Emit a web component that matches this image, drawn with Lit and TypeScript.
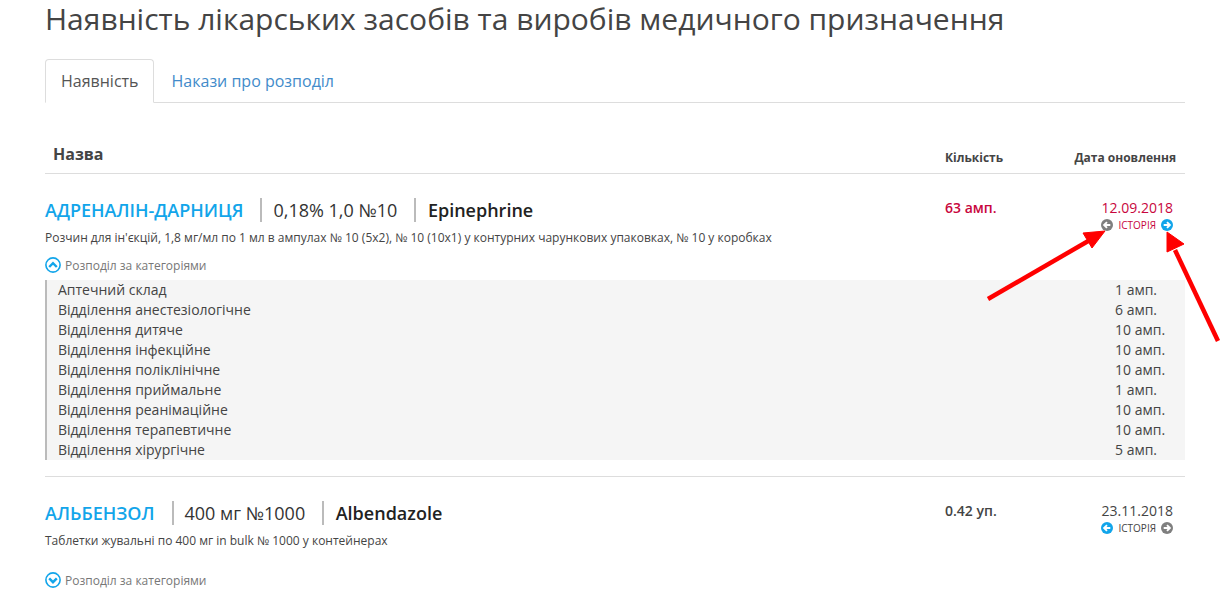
import { LitElement, html, css, svg } from "lit";
import { customElement } from "lit/decorators.js";

const cats: [string, string][] = [
  ["Аптечний склад", "1 амп."],
  ["Відділення анестезіологічне", "6 амп."],
  ["Відділення дитяче", "10 амп."],
  ["Відділення інфекційне", "10 амп."],
  ["Відділення поліклінічне", "10 амп."],
  ["Відділення приймальне", "1 амп."],
  ["Відділення реанімаційне", "10 амп."],
  ["Відділення терапевтичне", "10 амп."],
  ["Відділення хірургічне", "5 амп."],
];

const BLUE = "#12a5ea";

const arrowIcon = (dir: "left" | "right", color: string) => html`<svg class="ico" viewBox="0 0 12 12">
  <circle cx="6" cy="6" r="6" fill=${color}></circle>
  ${dir === "left"
    ? svg`<path d="M9.3 6H3.4M6 3.1 3.1 6 6 8.9" fill="none" stroke="#fff" stroke-width="1.9"></path>`
    : svg`<path d="M2.7 6h5.9M6 3.1 8.9 6 6 8.9" fill="none" stroke="#fff" stroke-width="1.9"></path>`}
</svg>`;

const chevron = (up: boolean) => html`<svg class="chev" viewBox="0 0 16 16">
  <circle cx="8" cy="8" r="7.1" fill="none" stroke=${BLUE} stroke-width="1.6"></circle>
  <path d=${up ? "M4.2 10 8 6.2 11.8 10" : "M4.2 6.4 8 10.2 11.8 6.4"} fill="none" stroke=${BLUE} stroke-width="2.4"></path>
</svg>`;

@customElement("app-root")
export class AppRoot extends LitElement {
  static styles = css`
    :host {
      display: block;
      position: relative;
      height: 603px;
      overflow: hidden;
      background: #fff;
      font-family: "Open Sans", sans-serif;
      color: #444;
    }
    .page { padding: 0 40px 0 45px; }
    h1 {
      margin: 0;
      height: 59px;
      box-sizing: border-box;
      font-size: 30px;
      line-height: 38px;
      font-weight: 400;
      color: #444;
      white-space: nowrap;
    }
    .tabs { display: flex; height: 43px; border-bottom: 1px solid #ddd; }
    .tab {
      box-sizing: border-box;
      height: 44px;
      padding: 0 15px;
      font-size: 16px;
      line-height: 44px;
      color: #428bca;
    }
    .tab.active {
      color: #555;
      background: #fff;
      border: 1px solid #ddd;
      border-bottom-color: #fff;
      border-radius: 4px 4px 0 0;
      line-height: 42px;
      padding-right: 14px;
      margin-right: 3px;
    }
    .head {
      display: grid;
      grid-template-columns: 1fr 120px 120px;
      height: 71px;
      box-sizing: border-box;
      padding-top: 41px;
      border-bottom: 1px solid #ddd;
      font-weight: 700;
      font-size: 12px;
      color: #444;
    }
    .head .name { font-size: 16px; font-weight: 700; padding-left: 8px; line-height: 20px; }
    .head .qty { line-height: 27px; }
    .head .date { line-height: 27px; text-align: right; padding-right: 9px; white-space: nowrap; }
    .item { display: grid; grid-template-columns: 1fr 120px 120px; }
    .item.first { padding-top: 23px; }
    .item.second { padding-top: 23px; border-top: 1px solid #ddd; margin-top: 16px; }
    .title { display: flex; align-items: center; height: 25px; font-size: 18px; color: #333; white-space: nowrap; }
    .drug { color: #12a5ea; font-weight: 600; }
    .sep { width: 2px; height: 24px; background: #bbb; margin: 0 12px 0 17px; }
    .inn { font-weight: 600; color: #222; margin-left: -0.5px; }
    .dose { margin-left: -1px; }
    .desc { font-size: 12px; line-height: 16px; margin-top: 8px; color: #444; white-space: nowrap; }
    .toggle {
      display: flex;
      align-items: center;
      gap: 4px;
      margin-top: 11px;
      height: 16px;
      font-size: 12px;
      color: #777;
    }
    .second .toggle { margin-top: 23px; }
    .chev { width: 16px; height: 16px; flex: none; }
    .qty-v { font-size: 14px; font-weight: 600; line-height: 18px; margin-top: 2px; color: #444; }
    .qty-v.red, .date-v.red { color: #c8063d; }
    .date-col { padding-right: 12px; display: flex; flex-direction: column; align-items: flex-end; }
    .date-v { font-size: 14px; line-height: 18px; margin-top: 2px; color: #444; }
    .hist { display: flex; align-items: center; gap: 5px; height: 16px; font-size: 10px; color: #444; }
    .hist.red { color: #c8063d; }
    .ico { width: 12px; height: 12px; flex: none; }
    .panel {
      background: #f5f5f5;
      border-left: 2px solid #bbb;
      padding-left: 11px;
      height: 180px;
      margin-top: 7px;
    }
    .panel-row {
      display: grid;
      grid-template-columns: 1fr 70px;
      font-size: 14px;
      line-height: 20px;
      color: #444;
    }
    .full { grid-column: 1 / -1; }
    .arrows { position: absolute; left: 0; top: 0; width: 1225px; height: 603px; pointer-events: none; }
  `;

  render() {
    return html`
      <div class="page">
        <h1>Наявність лікарських засобів та виробів медичного призначення</h1>
        <div class="tabs">
          <div class="tab active">Наявність</div>
          <div class="tab">Накази про розподіл</div>
        </div>
        <div class="head">
          <div class="name">Назва</div>
          <div class="qty">Кількість</div>
          <div class="date">Дата оновлення</div>
        </div>
        <div class="item first">
          <div>
            <div class="title">
              <span class="drug">АДРЕНАЛІН-ДАРНИЦЯ</span><span class="sep"></span>
              <span class="dose">0,18% 1,0 №10</span><span class="sep"></span>
              <span class="inn">Epinephrine</span>
            </div>
            <div class="desc">Розчин для ін'єкцій, 1,8 мг/мл по 1 мл в ампулах № 10 (5х2), № 10 (10х1) у контурних чарункових упаковках, № 10 у коробках</div>
            <div class="toggle">${chevron(true)}Розподіл за категоріями</div>
          </div>
          <div class="qty-v red">63 амп.</div>
          <div class="date-col">
            <div class="date-v red">12.09.2018</div>
            <div class="hist red">${arrowIcon("left", "#7f7f7f")}ІСТОРІЯ${arrowIcon("right", BLUE)}</div>
          </div>
          <div class="full panel">
            ${cats.map(([n, q]) => html`<div class="panel-row"><span>${n}</span><span>${q}</span></div>`)}
          </div>
        </div>
        <div class="item second">
          <div>
            <div class="title">
              <span class="drug">АЛЬБЕНЗОЛ</span><span class="sep"></span>
              <span class="dose">400 мг №1000</span><span class="sep"></span>
              <span class="inn">Albendazole</span>
            </div>
            <div class="desc">Таблетки жувальні по 400 мг in bulk № 1000 у контейнерах</div>
            <div class="toggle">${chevron(false)}Розподіл за категоріями</div>
          </div>
          <div class="qty-v">0.42 уп.</div>
          <div class="date-col">
            <div class="date-v">23.11.2018</div>
            <div class="hist">${arrowIcon("left", BLUE)}ІСТОРІЯ${arrowIcon("right", "#7f7f7f")}</div>
          </div>
        </div>
      </div>
      <svg class="arrows" viewBox="0 0 1225 603">
        <path d="M988 299 1090 240" stroke="#f00" stroke-width="4.5" fill="none"></path>
        <path d="M1105 231 1083 233 1092 248Z" fill="#f00" stroke="#f00" stroke-width="1"></path>
        <path d="M1218 341 1175 250" stroke="#f00" stroke-width="4.5" fill="none"></path>
        <path d="M1167 232 1167 252 1184 244Z" fill="#f00" stroke="#f00" stroke-width="1"></path>
      </svg>
    `;
  }
}
